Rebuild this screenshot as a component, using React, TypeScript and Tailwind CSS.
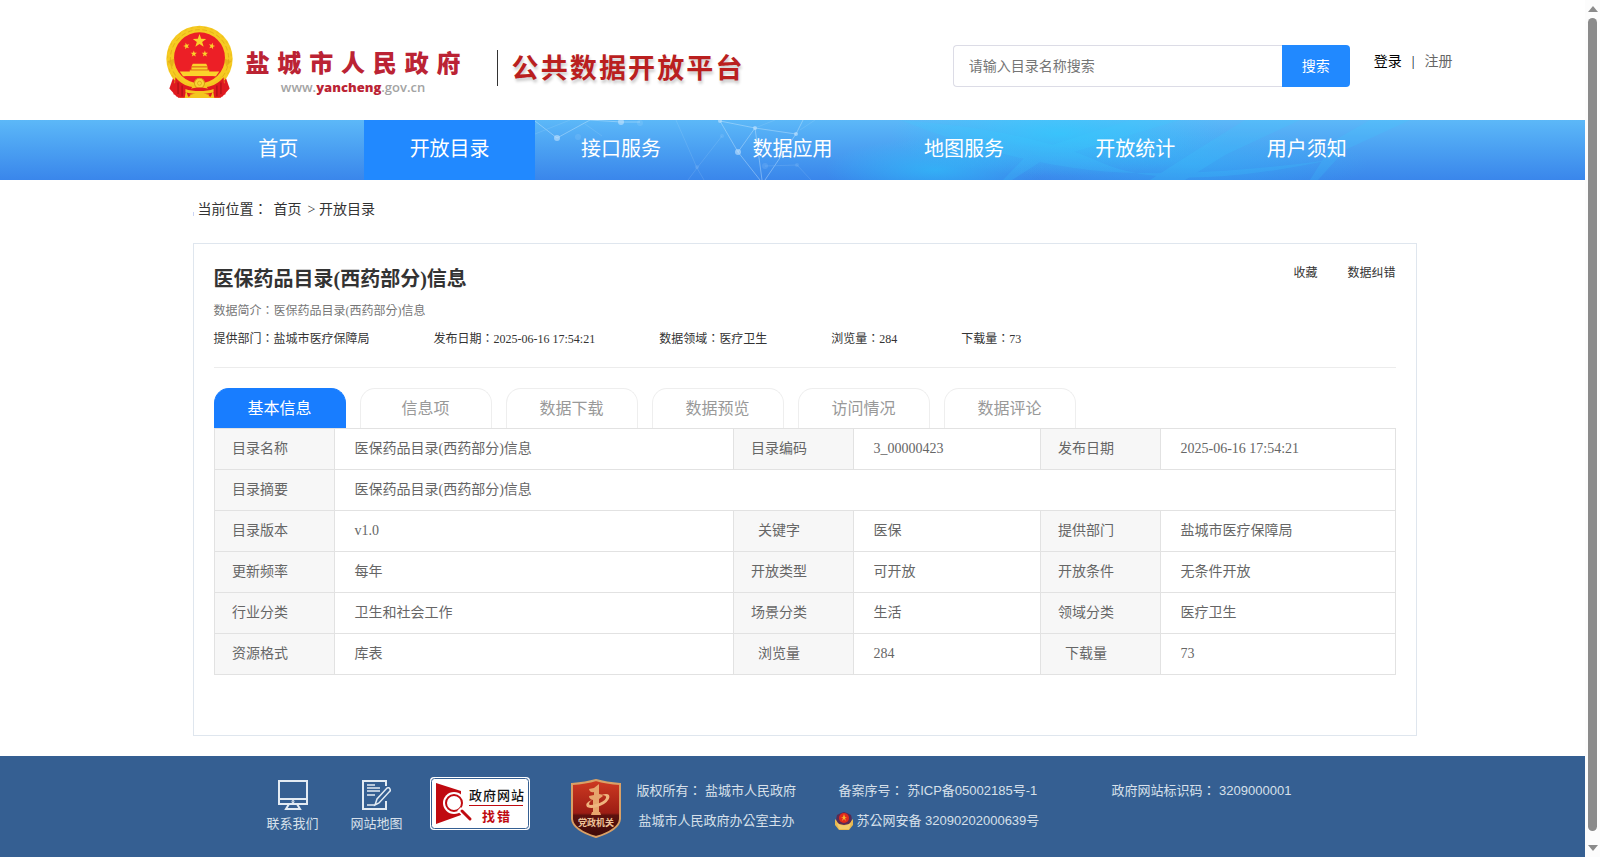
import { useState } from "react";

const SERIF = "font-['Liberation_Serif','Noto_Sans_CJK_JP',serif]";
const SANS = "font-['Liberation_Sans','Noto_Sans_CJK_JP',sans-serif]";

const NAV = ["首页", "开放目录", "接口服务", "数据应用", "地图服务", "开放统计", "用户须知"];

const META = [
  "提供部门：盐城市医疗保障局",
  "发布日期：2025-06-16 17:54:21",
  "数据领域：医疗卫生",
  "浏览量：284",
  "下载量：73",
];

const TABS = ["基本信息", "信息项", "数据下载", "数据预览", "访问情况", "数据评论"];

const ROWS: [string, string][][] = [
  [["目录名称", "医保药品目录(西药部分)信息"], ["目录编码", "3_00000423"], ["发布日期", "2025-06-16 17:54:21"]],
  [["目录摘要", "医保药品目录(西药部分)信息"]],
  [["目录版本", "v1.0"], ["关键字", "医保"], ["提供部门", "盐城市医疗保障局"]],
  [["更新频率", "每年"], ["开放类型", "可开放"], ["开放条件", "无条件开放"]],
  [["行业分类", "卫生和社会工作"], ["场景分类", "生活"], ["领域分类", "医疗卫生"]],
  [["资源格式", "库表"], ["浏览量", "284"], ["下载量", "73"]],
];

const STAR = "M0-10 2.4-3.2 9.5-3.1 3.8 1.2 5.9 8.1 0 4-5.9 8.1-3.8 1.2-9.5-3.1-2.4-3.2Z";

function Emblem() {
  return (
    <svg viewBox="0 0 200 218" preserveAspectRatio="none" className="h-[73px] w-[67px] shrink-0" aria-hidden>
      <path d="M24 150H176L190 190 168 214H32L10 190Z" fill="#df1a20" />
      <circle cx="100" cy="101" r="99" fill="#f6cb22" />
      <circle cx="100" cy="101" r="87" fill="none" stroke="#dca214" strokeWidth="2" strokeDasharray="14 8" />
      <circle cx="100" cy="101" r="95" fill="none" stroke="#e6b31c" strokeWidth="2" strokeDasharray="8 12" />
      <path d="M4 108 26 100 20 125ZM196 108 174 100 180 125Z" fill="#dca214" opacity="0.6" />
      <circle cx="100" cy="98" r="76" fill="#ec1f26" />
      <g fill="#fbd22b">
        <path d={STAR} transform="translate(100 48) scale(2.1)" />
        <path d={STAR} transform="translate(61 63) rotate(-15)" />
        <path d={STAR} transform="translate(137 63) rotate(15)" />
        <path d={STAR} transform="translate(83 86)" />
        <path d={STAR} transform="translate(116 86)" />
        <path d="M80 116h40l4 8H76ZM76 126h48v8H76ZM71 135h58v10H71Z" />
        <path d="M41 139h118l-10 14H51Z" />
      </g>
      <path d="M71 134h58M75 125h50" stroke="#d4920c" strokeWidth="2" />
      <path d="M35 150c15 22 35 30 65 30s50-8 65-30l10 20-16 48H41L25 170Z" fill="#f4c61f" />
      <path d="M56 153h88l-12 9-14 2-18-5-18 5-14-2Z" fill="#ec1f26" />
      <circle cx="100" cy="174" r="15" fill="#f8d437" stroke="#d99e12" strokeWidth="3" />
      <circle cx="100" cy="174" r="6" fill="none" stroke="#d99e12" strokeWidth="2" />
      <path d="M28 156c14 18 30 25 50 29l-8 15-11-1-3 18H36l-4-8-10-2 4-17Z" fill="#df1a20" />
      <path d="M172 156c-14 18-30 25-50 29l8 15 11-1 3 18h20l4-8 10-2-4-17Z" fill="#df1a20" />
      <path d="M60 196c24-12 56-12 80 0l-6 18-20-6-14 6-14-6-20 6Z" fill="#df1a20" />
      <path d="M58 191c20 8 64 8 84 0v9c-20 8-64 8-84 0ZM70 208l30-6 30 6-8 9H78Z" fill="#f4c61f" />
      <path d="M36 172v34M48 181v32M164 172v34M152 181v32" stroke="#a30f14" strokeWidth="3" />
    </svg>
  );
}

function NavArt() {
  return (
    <svg viewBox="0 0 1585 60" preserveAspectRatio="none" className="absolute inset-0 h-full w-full" aria-hidden>
      <defs>
        <radialGradient id="cyan">
          <stop offset="0" stopColor="#28d2ff" stopOpacity="0.6" />
          <stop offset="1" stopColor="#28d2ff" stopOpacity="0" />
        </radialGradient>
      </defs>
      <g fill="url(#cyan)">
        <ellipse cx="1060" cy="14" rx="170" ry="42" />
        <ellipse cx="935" cy="50" rx="110" ry="32" opacity="0.8" />
        <ellipse cx="1190" cy="44" rx="180" ry="36" opacity="0.5" />
      </g>
      <g fill="#3ccfff" opacity="0.18">
        <path d="M1003 60 1030 32 1130 0H1180L1040 42 1012 60Z" />
        <path d="M1150 60 1200 28 1245 0H1300L1225 35 1185 60Z" />
        <path d="M1310 60 1335 20 1370 0H1410L1345 30 1318 60Z" />
        <path d="M900 0Q1030 10 1100 42T1330 40Q1180 60 1090 50T900 0Z" />
      </g>
      <g stroke="#d8f0ff" fill="none" opacity="0.38">
        <path d="M535 1 557 18 590 0M590 0 621 2 640 2M720 1 755 8 796 14M720 1 738 32 760 60M755 8 738 32M755 8 762 60M796 14 803 0M796 14 765 60" />
        <path d="M676 0 697 48 722 16M697 48 704 60M697 48 688 60M765 46 797 45 811 60M800 10 815 0M535 14 570 0M602 16 585 4M755 8 775 0" opacity="0.35" />
      </g>
      <g fill="#cfe9ff" opacity="0.55">
        <circle cx="557" cy="18" r="3" />
        <circle cx="621" cy="2" r="3" />
        <circle cx="720" cy="1" r="2" />
        <circle cx="738" cy="32" r="3" />
        <circle cx="755" cy="8" r="2" />
        <circle cx="796" cy="14" r="2" />
      </g>
      <g fill="#cfe9ff" opacity="0.12">
        <circle cx="578" cy="17" r="3" />
        <circle cx="640" cy="3" r="3" />
        <circle cx="697" cy="47" r="2" />
        <circle cx="722" cy="16" r="2" />
        <circle cx="765" cy="46" r="3" />
        <circle cx="797" cy="45" r="2" />
      </g>
    </svg>
  );
}

function FindErrorBadge() {
  return (
    <svg viewBox="0 0 100 53" className="h-[53px] w-[100px]" role="img" aria-label="政府网站找错">
      <rect width="100" height="53" rx="4" fill="#fff" />
      <rect x="1.5" y="1.5" width="97" height="50" rx="3" fill="none" stroke="#355f92" />
      <path d="M6 6 31 14V38L6 47Z" fill="#c00a10" />
      <circle cx="24" cy="26" r="11" fill="#fff" />
      <circle cx="24" cy="26" r="8" fill="#fff" stroke="#c00a10" strokeWidth="2" />
      <path d="M29 32 40 43" stroke="#fff" strokeWidth="5" />
      <path d="M32 34 40 42" stroke="#c00a10" strokeWidth="3" strokeLinecap="round" />
      <path d="M39 28.5H93" stroke="#c00a10" />
      <g fontSize="13" fontWeight="500" fill="#111">
        <text x="39 53 67 81" y="23">政府网站</text>
      </g>
      <g fontSize="13" fontWeight="700" fill="#c00a10">
        <text x="52 67" y="44">找错</text>
      </g>
    </svg>
  );
}

function PartyShield() {
  return (
    <svg viewBox="0 0 50 59" className="h-[59px] w-[50px]" role="img" aria-label="党政机关">
      <defs>
        <linearGradient id="shield" x1="0" y1="0" x2="0" y2="1">
          <stop offset="0" stopColor="#cf3a22" />
          <stop offset="0.58" stopColor="#9c1d14" />
          <stop offset="0.62" stopColor="#5c120e" />
          <stop offset="1" stopColor="#3d0a09" />
        </linearGradient>
      </defs>
      <path
        d="M1 5Q15 4 25 1 35 4 49 5V40Q48 51 25 58 2 51 1 40Z"
        fill="url(#shield)"
        stroke="#d9a066"
        strokeWidth="2"
      />
      <path d="M22 35V21Q18 20 18 17L23 16V13Q19 14 18 10L23 9 28 5V15Q31 15 32 17L28 20V35Z" fill="#e7a56c" />
      <path d="M21 21Q13 24 16 28 22 31 33 25 40 20 38 16 36 14 30 16 36 16 35 19 33 23 25 25 18 27 18 25 18 23 21 21Z" fill="#efb47e" />
      <path d="M21 33H29L30 36H20Z" fill="#e7a56c" />
      <text x="25" y="47" textAnchor="middle" fontSize="9" fontWeight="700" fill="#eec39a">党政机关</text>
    </svg>
  );
}

function PoliceIcon() {
  return (
    <svg viewBox="0 0 18 18" className="h-[18px] w-[18px]" aria-hidden>
      <path d="M0 7 4 11H14L18 7V13L14 18H4L0 13Z" fill="#e9b950" />
      <path d="M9 0 12 1 16 3Q18 9 14 12L9 13 4 12Q0 9 2 3L6 1Z" fill="#5a2a52" />
      <circle cx="9" cy="6" r="5" fill="#e02a1c" />
      <path d="M9 2 10 5H12L10 6 11 9 9 7 7 9 8 6 6 5H8Z" fill="#f6b52c" />
      <path d="M2 11Q9 16 16 11L14 17H4Z" fill="#f2cb6c" />
    </svg>
  );
}

// wordmark characters spread evenly over the given width
function Wordmark({ text, className }: { text: string; className: string }) {
  return (
    <span className={`flex justify-between ${className}`}>
      {text.split("").map((c) => (
        <span key={c}>{c}</span>
      ))}
    </span>
  );
}

function Header() {
  return (
    <header className="mx-auto flex h-[120px] w-full max-w-[1320px] items-start pl-[33px]">
      <a href="#" className="flex shrink-0 pt-[25px]">
        <Emblem />
        <span className="ml-[13px] flex flex-col pt-6 font-['Liberation_Sans','Noto_Sans_CJK_SC',sans-serif]">
          <Wordmark text="盐城市人民政府" className="w-[215px] text-[24px] leading-[30px] font-black text-[#bb2334]" />
          <span className="text-center font-['Open_Sans',sans-serif] text-[13px] leading-4 font-semibold text-[#a3a3a3]">
            www.<b className="text-[#bb2334]">yancheng</b>.gov.cn
          </span>
        </span>
      </a>
      <span className="mt-[50px] ml-9 h-9 w-px shrink-0 bg-[#333]" />
      <Wordmark
        text="公共数据开放平台"
        className={`mt-[51px] ml-[14px] w-[231px] shrink-0 text-[27px] leading-9 font-bold text-[#ba1f1f] [text-shadow:1px_3px_3px_rgba(0,0,0,0.2)] ${SANS}`}
      />
      <form className="mt-[45px] ml-auto flex h-[42px] w-[397px]" onSubmit={(e) => e.preventDefault()}>
        <input
          aria-label="目录名称"
          placeholder="请输入目录名称搜索"
          className="min-w-0 flex-1 rounded-l-[4px] border border-r-0 border-[#dcdce6] px-[15px] text-[14px] outline-none placeholder:text-[#757575]"
        />
        <button className="w-[68px] rounded-r-[4px] bg-[#2189ff] text-[14px] text-white">搜索</button>
      </form>
      <div className="mt-[52px] ml-6 flex gap-[10px] text-[14px] leading-5 text-black">
        <a href="#">登录</a>
        <span>|</span>
        <a href="#" className="text-[#666]">注册</a>
      </div>
    </header>
  );
}

function Nav() {
  return (
    <nav className="relative h-[60px] bg-linear-to-b from-[#5cb8f8] to-[#3a86eb]">
      <NavArt />
      <div className="relative mx-auto flex h-full max-w-[1200px]">
        {NAV.map((n) => (
          <a
            key={n}
            href="#"
            className={`flex-1 text-center text-[20px] leading-[58px] text-white ${n === "开放目录" ? "bg-[#2189ff]" : ""}`}
          >
            {n}
          </a>
        ))}
      </div>
    </nav>
  );
}

function InfoTable() {
  return (
    <table className="w-full table-fixed border-collapse text-left text-[14px] leading-5 text-[#666]">
      <colgroup>
        <col className="w-[120px]" />
        <col />
        <col className="w-[120px]" />
        <col className="w-[187px]" />
        <col className="w-[120px]" />
        <col className="w-[235px]" />
      </colgroup>
      <tbody>
        {ROWS.map((row) => (
          <tr key={row[0][0]} className="h-[41px]">
            {row.map(([label, value]) => [
              <th key={label} className="border border-[#e2e2e2] bg-[#f7f7f7] pr-7 text-center font-normal">
                {label}
              </th>,
              <td key={label + "v"} colSpan={row.length === 1 ? 5 : 1} className="border border-[#e2e2e2] px-5">
                {value}
              </td>,
            ])}
          </tr>
        ))}
      </tbody>
    </table>
  );
}

function Detail() {
  const [tab, setTab] = useState(TABS[0]);
  return (
    <main className="mx-auto w-full max-w-[1200px]">
      <div lang="zh-TW" className="flex h-[63px] items-center gap-[6px] pb-1 text-[14px] text-[#333]">
        <span className="-mr-[2px] mt-2 h-1 w-px bg-[#ccd5f5]" />
        <span>当前位置：</span>
        <a href="#">首页</a>
        <span>
          &gt; <a href="#">开放目录</a>
        </span>
      </div>
      <section className="-mr-6 min-h-[493px] border border-[#dfe6ee] px-5 pt-[19px] pb-[60px]">
        <div className="flex items-start justify-between">
          <h1 className="text-[20px] leading-8 font-bold text-[#333]">医保药品目录(西药部分)信息</h1>
          <div className="flex gap-[30px] text-[12px] leading-5 text-[#333]">
            <a href="#">收藏</a>
            <a href="#">数据纠错</a>
          </div>
        </div>
        <p lang="zh-TW" className="mt-1 text-[12px] leading-6 text-[#777]">数据简介：医保药品目录(西药部分)信息</p>
        <div lang="zh-TW" className="mt-1 flex gap-16 text-[12px] leading-6 text-[#333]">
          {META.map((m) => (
            <span key={m}>{m}</span>
          ))}
        </div>
        <div className="mt-4 border-t border-[#ececec] pt-5">
          <div role="tablist" className="flex gap-[14px]">
            {TABS.map((t) => (
              <button
                key={t}
                role="tab"
                aria-selected={t === tab}
                onClick={() => setTab(t)}
                className={`h-10 w-[132px] rounded-t-[15px] border border-b-0 text-[16px] ${
                  t === tab ? "border-[#187dff] bg-[#187dff] text-white" : "border-[#eee] text-[#999]"
                }`}
              >
                {t}
              </button>
            ))}
          </div>
          <InfoTable />
        </div>
      </section>
    </main>
  );
}

function Footer() {
  return (
    <footer className={`mt-5 flex-1 bg-[#355f92] text-[13px] leading-5 text-[#d7e0ea] ${SANS}`}>
      <div className="mx-auto flex max-w-[1200px] pt-[21px] pl-[74px]">
        <a href="#" className="flex w-[52px] flex-col items-center pt-[3px]">
          <svg viewBox="0 0 30 30" className="mb-1 h-[30px] w-[30px]" fill="none" stroke="#e3ebf3" strokeWidth="2">
            <path d="M1 1H29V24H1ZM1 19H29M11 24 8 29H22L19 24" />
            <circle cx="15" cy="21.5" r="0.5" />
          </svg>
          联系我们
        </a>
        <a href="#" className="ml-8 flex w-[52px] flex-col items-center pt-[3px]">
          <svg viewBox="1 0 30 30" className="mb-1 h-[30px] w-[30px]" fill="none" stroke="#e3ebf3" strokeWidth="2">
            <path d="M25 6V1H2V29H25V21" />
            <path d="M6 5H14M6 8H19M6 11H19M6 15H14M14 25 16 19 26 8Q28 7 29 9 30 11 28 12L18 23ZM6 25H14" strokeWidth="1.5" />
          </svg>
          网站地图
        </a>
        <a href="#" className="ml-[27px]">
          <FindErrorBadge />
        </a>
        <a href="#" className="ml-[41px] pt-[2px]">
          <PartyShield />
        </a>
        <div lang="zh-TW" className="ml-4 grid grid-cols-[198px_277px_auto] content-start gap-y-[10px] pt-1">
          <span>版权所有： 盐城市人民政府</span>
          <span className="pl-1">
            备案序号： <a href="#">苏ICP备05002185号-1</a>
          </span>
          <span>政府网站标识码： 3209000001</span>
          <span className="pl-[2px]">盐城市人民政府办公室主办</span>
          <a href="#" className="flex items-center gap-1">
            <PoliceIcon />
            苏公网安备 32090202000639号
          </a>
        </div>
      </div>
    </footer>
  );
}

function ScrollRail() {
  return (
    <div aria-hidden className="sticky top-0 flex h-screen w-[15px] shrink-0 flex-col items-center bg-[#fcfcfc] py-[6px]">
      <svg viewBox="0 0 10 6" className="h-[6px] w-[10px]" fill="#8b8b8b">
        <path d="M5 0 10 6H0Z" />
      </svg>
      <div className="mt-[6px] mb-[14px] w-[9px] flex-1 rounded-full bg-[#8b8b8b]" />
      <svg viewBox="0 0 10 6" className="h-[6px] w-[10px]" fill="#8b8b8b">
        <path d="M5 6 10 0H0Z" />
      </svg>
    </div>
  );
}

export default function App() {
  return (
    <div className={`flex min-h-screen bg-white ${SERIF}`} lang="zh-CN">
      <div className="flex min-w-0 flex-1 flex-col">
        <Header />
        <Nav />
        <Detail />
        <Footer />
      </div>
      <ScrollRail />
    </div>
  );
}
